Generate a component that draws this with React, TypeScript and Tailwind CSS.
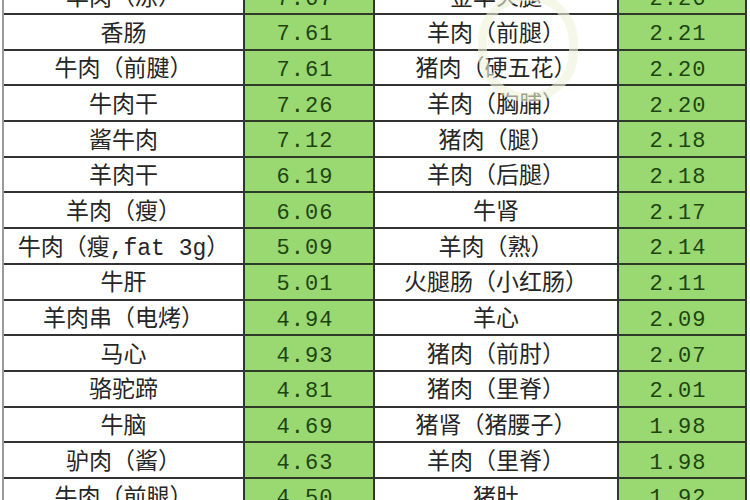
const rows: [string, string, string, string][] = [
  ['羊肉（冻）', '7.67', '金华火腿', '2.26'],
  ['香肠', '7.61', '羊肉（前腿）', '2.21'],
  ['牛肉（前腱）', '7.61', '猪肉（硬五花）', '2.20'],
  ['牛肉干', '7.26', '羊肉（胸脯）', '2.20'],
  ['酱牛肉', '7.12', '猪肉（腿）', '2.18'],
  ['羊肉干', '6.19', '羊肉（后腿）', '2.18'],
  ['羊肉（瘦）', '6.06', '牛肾', '2.17'],
  ['牛肉（瘦,fat 3g）', '5.09', '羊肉（熟）', '2.14'],
  ['牛肝', '5.01', '火腿肠（小红肠）', '2.11'],
  ['羊肉串（电烤）', '4.94', '羊心', '2.09'],
  ['马心', '4.93', '猪肉（前肘）', '2.07'],
  ['骆驼蹄', '4.81', '猪肉（里脊）', '2.01'],
  ['牛脑', '4.69', '猪肾（猪腰子）', '1.98'],
  ['驴肉（酱）', '4.63', '羊肉（里脊）', '1.98'],
  ['牛肉（前腿）', '4.50', '猪肚', '1.92'],
];

const cellFont = { fontFamily: '"Liberation Mono", "Noto Sans CJK SC", monospace' };

function Name({ text }: { text: string }) {
  return (
    <div
      className="h-[35.7px] pt-[6px] flex items-center justify-center border-r-2 border-b-2 border-[#333] text-[23px] text-[#262626] whitespace-nowrap overflow-hidden"
      style={cellFont}
    >
      {text}
    </div>
  );
}

function Value({ text }: { text: string }) {
  return (
    <div
      className="h-[35.7px] pt-[6px] pr-[8px] flex items-center justify-center border-r-2 border-b-2 border-[#2c3a26] bg-[#9ad872] text-[22px] tracking-[1px] text-[#1d4410]"
      style={cellFont}
    >
      {text}
    </div>
  );
}

export default function App() {
  return (
    <div className="relative w-[750px] h-[500px] overflow-hidden bg-white">
      <div className="ml-[2px] mt-[-20.7px] border-l-2 border-[#9a9a9a] grid grid-cols-[241px_130px_244px_128px]">
        {rows.map((r, i) => (
          <div key={i} className="contents">
            <Name text={r[0]} />
            <Value text={r[1]} />
            <Name text={r[2]} />
            <Value text={r[3]} />
          </div>
        ))}
      </div>

      {/* 水印 logo */}
      <div className="absolute left-[478px] top-[-8px] w-[100px] h-[110px] rounded-full border-[9px] border-[#eef2d8] opacity-60 pointer-events-none" />
    </div>
  );
}
